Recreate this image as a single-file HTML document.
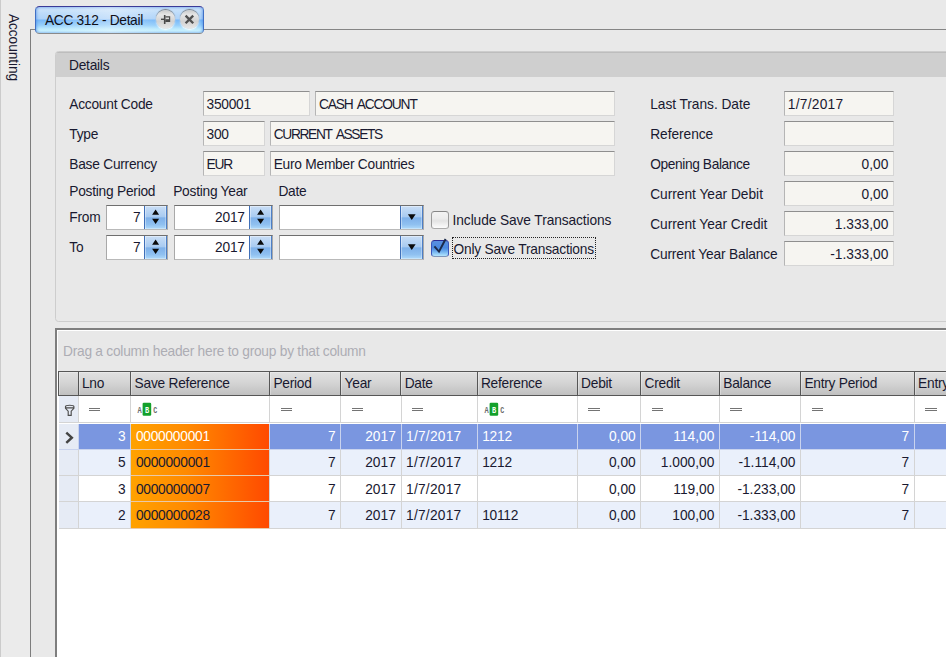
<!DOCTYPE html>
<html><head><meta charset="utf-8"><title>ACC 312 - Detail</title>
<style>
*{box-sizing:border-box;margin:0;padding:0}
html,body{width:946px;height:657px;overflow:hidden}
body{position:relative;background:#e9e9e9;font-family:"Liberation Sans",sans-serif;font-size:13.75px;letter-spacing:-0.25px;color:#191930;line-height:16px}
.a{position:absolute;white-space:nowrap}
#side{left:0;top:0;width:30px;height:657px;background:#ebebeb;border-left:1px solid #cbcbcb}
#sidetxt{left:19.8px;top:14.4px;transform-origin:0 0;transform:rotate(90deg);line-height:14px;letter-spacing:-0.1px}
#main{left:30px;top:29px;width:930px;height:640px;background:#e9e9e9;border-left:1.3px solid #7d7d7d;border-top:1.3px solid #858585}
#tab{left:35px;top:6px;width:169px;height:27.5px;border-radius:4.5px;border:1.7px solid #3f6fc4;border-top-color:#3b3b98;border-bottom-color:#8a8a8a;
 background:linear-gradient(to bottom,#d9ebfc 0%,#c0ddfa 20%,#aed3f9 46%,#78b8f8 50%,#96cffb 70%,#cdf5ff 90%,#dcfcff 100%);overflow:hidden;box-shadow:inset 0 0 3px 0.5px rgba(50,120,225,.65)}
#tab:before{content:"";position:absolute;left:20px;right:40px;top:0;bottom:0;background:linear-gradient(to right,rgba(255,255,255,0),rgba(255,255,255,.3) 50%,rgba(255,255,255,0))}
#tabtxt{left:45px;top:12.5px;color:#101018;letter-spacing:-0.33px}
.rb{width:19px;height:19px;border-radius:50%;background:linear-gradient(to bottom,#c9c9c9 0%,#e6e6e6 25%,#d2d2d2 60%,#e9e9e9 100%);box-shadow:0 -1px 1px rgba(90,90,90,.75),0 1px 1.5px rgba(255,255,255,.95)}
#details{left:55px;top:51px;width:910px;height:270.5px;background:#e8e8e8;border:1px solid #cdcdcd;border-radius:3.5px;overflow:hidden}
#dhead{left:0;top:0;width:100%;height:24.8px;background:#cfcfcf;border-top:1px solid #bdbdbd}
.f{height:24.5px;background:#f6f5f1;border:1.3px solid #d6d6d6;border-top-color:#8f8f8f;border-left-color:#b5b5b5;padding:4.5px 4.5px 0 3px}
.r{text-align:right;letter-spacing:0}
.sp{height:24.5px;background:#fff;border:1.3px solid #cfcfcf;border-top-color:#6f6f6f;border-left-color:#a9a9a9;border-right-color:#a9a9a9;border-bottom-color:#b9b9b9;padding:4.3px 0 0 0;text-align:right}
.btn{top:0;right:0;bottom:0;width:23px;border-left:1px solid #3f6fb8;border-right:1px solid #4d7fc6;
 background:linear-gradient(to bottom,#c9def6 0%,#a9cbf1 46%,#7fb1ea 52%,#8fc0f0 80%,#b0dafa 100%);box-shadow:inset 1px 1px 0 rgba(255,255,255,.4),inset -1px -1px 0 rgba(255,255,255,.3)}
.btn svg{position:absolute;left:0;top:0}
.cb{width:18px;height:17px;border-radius:3.5px}
#grid{left:55px;top:328px;width:910px;height:340px;background:#fff;border:2px solid #7e7e7e;border-right:0;border-bottom:0}
#gp{left:1px;top:1px;width:100%;height:41px;background:#e8e8e8}
.hc{top:370.5px;height:25.5px;border:1.2px solid #565656;border-left-width:0;background:linear-gradient(to bottom,#e0e0e0 0%,#d5d5d5 45%,#c0c0c0 100%);box-shadow:inset 1px 1px 0 rgba(255,255,255,.3);padding:4.8px 0 0 3.4px}
.row{left:58.8px;width:900px;height:26.4px}
.c{top:0;height:100%;border-right:1px solid #d4d4d4;border-bottom:1px solid #d4d4d4;padding:5.9px 4.8px 0 4.4px}
.ind{left:0;width:20px;background:#e6ebf5}
.sel .c{color:#fff;border-color:#c9d3ee;padding-top:5.9px}
.sr{background:linear-gradient(to right,#ffa200 0%,#ff8a00 40%,#ff4a00 100%);border-bottom-color:#e9c9a8 !important}
.eq{width:11.4px;height:3.5px;border-top:1.15px solid #747474;border-bottom:1.15px solid #747474;top:12px}
.abc text{font-family:"Liberation Mono",monospace;font-size:8.6px;font-weight:bold;letter-spacing:0;fill:#6c6c6c}
</style></head><body>
<div id="side" class="a"></div>
<div id="sidetxt" class="a">Accounting</div>
<div id="main" class="a"></div>
<div id="tab" class="a"></div>
<div id="tabtxt" class="a">ACC 312 - Detail</div>
<div class="a rb" style="left:156px;top:10px"></div>
<div class="a rb" style="left:180px;top:10px"></div>
<svg class="a" style="left:156px;top:10px" width="43" height="19" viewBox="0 0 43 19">
 <g fill="none" stroke="#4a4a4a" stroke-linecap="butt">
  <path d="M5 9.3H9" stroke-width="1.4"/><path d="M8.7 5V14" stroke-width="1.6"/><path d="M9.4 6.8H13.6V11.3H9.4" stroke-width="1.2"/><path d="M9.4 10.3H14" stroke-width="2.2"/>
  <path d="M29.6 5.6L37.2 13.2M37.2 5.6L29.6 13.2" stroke-width="2.3" stroke="#505050"/>
 </g></svg>

<div id="details" class="a"><div id="dhead" class="a"></div></div>
<div class="a" style="left:69px;top:57.5px">Details</div>

<div class="a" style="left:69.3px;top:96.5px">Account Code</div>
<div class="a" style="left:69.3px;top:126.5px">Type</div>
<div class="a" style="left:69.3px;top:156.5px">Base Currency</div>
<div class="a" style="left:69.3px;top:183.5px">Posting Period</div>
<div class="a" style="left:173.2px;top:183.5px">Posting Year</div>
<div class="a" style="left:278.4px;top:183.5px">Date</div>
<div class="a" style="left:69.3px;top:209.5px">From</div>
<div class="a" style="left:69.3px;top:239.5px">To</div>

<div class="a f" style="left:202.5px;top:91px;width:107.5px">350001</div>
<div class="a f" style="left:315px;top:91px;width:299.5px;letter-spacing:-1.15px;word-spacing:2.2px">CASH ACCOUNT</div>
<div class="a f" style="left:202.5px;top:121px;width:62.5px">300</div>
<div class="a f" style="left:269.7px;top:121px;width:345px;letter-spacing:-1.33px;word-spacing:2.6px">CURRENT ASSETS</div>
<div class="a f" style="left:202.5px;top:151px;width:62.5px;letter-spacing:-1.2px">EUR</div>
<div class="a f" style="left:269.7px;top:151px;width:345px">Euro Member Countries</div>

<div class="a sp" style="left:106px;top:205px;width:62px;padding-right:26.6px">7<div class="a btn"><svg width="23" height="22" viewBox="0 0 23 22"><path d="M10.6 3.4L14.1 8.8H7.1zM7.1 12.8H14.1L10.6 18.1z" fill="#0a0a0a"/></svg></div></div>
<div class="a sp" style="left:174px;top:205px;width:99px;padding-right:27.3px">2017<div class="a btn"><svg width="23" height="22" viewBox="0 0 23 22"><path d="M10.6 3.4L14.1 8.8H7.1zM7.1 12.8H14.1L10.6 18.1z" fill="#0a0a0a"/></svg></div></div>
<div class="a sp" style="left:278.6px;top:205px;width:145.6px"><div class="a btn"><svg width="23" height="22" viewBox="0 0 23 22"><path d="M6.9 8.3H14.6L10.75 14z" fill="#0a0a0a"/></svg></div></div>
<div class="a sp" style="left:106px;top:235px;width:62px;padding-right:26.6px">7<div class="a btn"><svg width="23" height="22" viewBox="0 0 23 22"><path d="M10.6 3.4L14.1 8.8H7.1zM7.1 12.8H14.1L10.6 18.1z" fill="#0a0a0a"/></svg></div></div>
<div class="a sp" style="left:174px;top:235px;width:99px;padding-right:27.3px">2017<div class="a btn"><svg width="23" height="22" viewBox="0 0 23 22"><path d="M10.6 3.4L14.1 8.8H7.1zM7.1 12.8H14.1L10.6 18.1z" fill="#0a0a0a"/></svg></div></div>
<div class="a sp" style="left:278.6px;top:235px;width:145.6px"><div class="a btn"><svg width="23" height="22" viewBox="0 0 23 22"><path d="M6.9 8.3H14.6L10.75 14z" fill="#0a0a0a"/></svg></div></div>

<div class="a cb" style="left:431px;top:211.3px;height:17.5px;border:1.7px solid #9a9a9a;border-top-color:#868686;border-bottom-color:#ababab;background:linear-gradient(to bottom,#f3f3f3 0%,#ececec 40%,#e3e3e3 55%,#f4f4f4 85%,#fcfcfc 100%)"></div>
<div class="a" style="left:452.6px;top:212.6px;letter-spacing:-0.1px">Include Save Transactions</div>
<div class="a cb" style="left:431px;top:239.6px;height:17.4px;border:1.8px solid #3a55bb;border-top-color:#2b2b92;border-bottom-color:#7f95b8;background:linear-gradient(to bottom,#5a90e0 0%,#4a88e0 45%,#5e9ee8 60%,#86c2f4 80%,#b4e6fd 100%)"></div>
<svg class="a" style="left:431px;top:234px" width="22" height="24" viewBox="0 0 22 24"><path d="M3.4 12.4L8 17.6L14.6 5" fill="none" stroke="#1c2a4a" stroke-width="2"/></svg>
<div class="a" style="left:452.3px;top:237.3px;width:143.6px;height:22.2px;border:1px dotted #222"></div>
<div class="a" style="left:453.5px;top:241.6px;letter-spacing:-0.22px">Only Save Transactions</div>

<div class="a" style="left:650.2px;top:96.5px;letter-spacing:-0.05px">Last Trans. Date</div>
<div class="a" style="left:650.2px;top:126.5px;letter-spacing:-0.05px">Reference</div>
<div class="a" style="left:650.2px;top:156.5px;letter-spacing:-0.39px">Opening Balance</div>
<div class="a" style="left:650.2px;top:186.5px;letter-spacing:-0.02px">Current Year Debit</div>
<div class="a" style="left:650.2px;top:216.5px;letter-spacing:-0.03px">Current Year Credit</div>
<div class="a" style="left:650.2px;top:246.5px;letter-spacing:-0.17px">Current Year Balance</div>
<div class="a f" style="left:783.8px;top:91px;width:110px;letter-spacing:0.25px">1/7/2017</div>
<div class="a f" style="left:783.8px;top:121px;width:110px"></div>
<div class="a f r" style="left:783.8px;top:151px;width:110px">0,00</div>
<div class="a f r" style="left:783.8px;top:181px;width:110px">0,00</div>
<div class="a f r" style="left:783.8px;top:211px;width:110px">1.333,00</div>
<div class="a f r" style="left:783.8px;top:241px;width:110px">-1.333,00</div>

<div id="grid" class="a"><div id="gp" class="a"></div></div>
<div class="a" style="left:63px;top:344.3px;color:#adadb4">Drag a column header here to group by that column</div>

<div class="a hc" style="left:58px;width:20.6px;border-left-width:1.2px"></div>
<div class="a hc" style="left:78.5px;width:52.8px">Lno</div>
<div class="a hc" style="left:131.2px;width:138.9px">Save Reference</div>
<div class="a hc" style="left:270px;width:71.3px">Period</div>
<div class="a hc" style="left:341.2px;width:60.2px">Year</div>
<div class="a hc" style="left:401.3px;width:76.3px">Date</div>
<div class="a hc" style="left:477.5px;width:100.3px">Reference</div>
<div class="a hc" style="left:577.7px;width:63.6px">Debit</div>
<div class="a hc" style="left:641.2px;width:78.8px">Credit</div>
<div class="a hc" style="left:719.9px;width:81.2px">Balance</div>
<div class="a hc" style="left:801px;width:113.8px">Entry Period</div>
<div class="a hc" style="left:914.7px;width:60px">Entry Year</div>

<div class="a row" style="top:395.5px;height:27.1px">
 <div class="a c ind"><svg class="a" style="left:5px;top:8px" width="12" height="13" viewBox="0 0 12 13"><path d="M1.5 2.4C1.5 0.9 9.9 0.9 9.9 2.4V4.3L7.2 7.2V11.4H4.2V7.2L1.5 4.3zM1.6 3.9H9.8" fill="none" stroke="#4e4e4e" stroke-width="1.15"/></svg></div>
 <div class="a c" style="left:20px;width:52.7px"><div class="a eq" style="left:10.3px"></div></div>
 <div class="a c" style="left:72.7px;width:138.8px"><svg class="a abc" style="left:6px;top:6.5px" width="22" height="15" viewBox="0 0 22 15"><text x="0.4" y="10.5" textLength="4.2" lengthAdjust="spacingAndGlyphs">A</text><rect x="5.6" y="0.7" width="8.6" height="13.1" rx="1.2" fill="#13a02b"/><text x="7.9" y="10.5" textLength="4.2" lengthAdjust="spacingAndGlyphs" style="fill:#f2fff2">B</text><text x="16.2" y="10.5" textLength="4" lengthAdjust="spacingAndGlyphs">C</text></svg></div>
 <div class="a c" style="left:211.5px;width:71.2px"><div class="a eq" style="left:10.3px"></div></div>
 <div class="a c" style="left:282.7px;width:60.1px"><div class="a eq" style="left:10.3px"></div></div>
 <div class="a c" style="left:342.8px;width:76.2px"><div class="a eq" style="left:10.3px"></div></div>
 <div class="a c" style="left:419px;width:100.2px"><svg class="a abc" style="left:6px;top:6.5px" width="22" height="15" viewBox="0 0 22 15"><text x="0.4" y="10.5" textLength="4.2" lengthAdjust="spacingAndGlyphs">A</text><rect x="5.6" y="0.7" width="8.6" height="13.1" rx="1.2" fill="#13a02b"/><text x="7.9" y="10.5" textLength="4.2" lengthAdjust="spacingAndGlyphs" style="fill:#f2fff2">B</text><text x="16.2" y="10.5" textLength="4" lengthAdjust="spacingAndGlyphs">C</text></svg></div>
 <div class="a c" style="left:519.2px;width:63.5px"><div class="a eq" style="left:10.3px"></div></div>
 <div class="a c" style="left:582.7px;width:78.7px"><div class="a eq" style="left:10.3px"></div></div>
 <div class="a c" style="left:661.4px;width:81.1px"><div class="a eq" style="left:10.3px"></div></div>
 <div class="a c" style="left:742.5px;width:113.7px"><div class="a eq" style="left:10.3px"></div></div>
 <div class="a c" style="left:856.2px;width:60px"><div class="a eq" style="left:10.3px"></div></div>
</div>

<div class="a row sel" style="top:423.6px;height:26px;background:#7a96e0">
 <div class="a c ind"><svg class="a" style="left:3px;top:5px" width="14" height="16" viewBox="0 0 14 16"><path d="M4.3 3.6L9.8 8.7L4.3 13.8" fill="none" stroke="#444" stroke-width="2.5"/></svg></div>
 <div class="a c r" style="left:20px;width:52.7px">3</div>
 <div class="a c sr" style="left:72.7px;width:138.8px">0000000001</div>
 <div class="a c r" style="left:211.5px;width:71.2px">7</div>
 <div class="a c r" style="left:282.7px;width:60.1px">2017</div>
 <div class="a c" style="left:342.8px;width:76.2px;letter-spacing:0.25px">1/7/2017</div>
 <div class="a c" style="left:419px;width:100.2px">1212</div>
 <div class="a c r" style="left:519.2px;width:63.5px">0,00</div>
 <div class="a c r" style="left:582.7px;width:78.7px">114,00</div>
 <div class="a c r" style="left:661.4px;width:81.1px">-114,00</div>
 <div class="a c r" style="left:742.5px;width:113.7px">7</div>
 <div class="a c r" style="left:856.2px;width:60px"></div>
</div>
<div class="a row" style="top:449.6px;background:#eaf0fb">
 <div class="a c ind"></div>
 <div class="a c r" style="left:20px;width:52.7px">5</div>
 <div class="a c sr" style="left:72.7px;width:138.8px">0000000001</div>
 <div class="a c r" style="left:211.5px;width:71.2px">7</div>
 <div class="a c r" style="left:282.7px;width:60.1px">2017</div>
 <div class="a c" style="left:342.8px;width:76.2px;letter-spacing:0.25px">1/7/2017</div>
 <div class="a c" style="left:419px;width:100.2px">1212</div>
 <div class="a c r" style="left:519.2px;width:63.5px">0,00</div>
 <div class="a c r" style="left:582.7px;width:78.7px">1.000,00</div>
 <div class="a c r" style="left:661.4px;width:81.1px">-1.114,00</div>
 <div class="a c r" style="left:742.5px;width:113.7px">7</div>
 <div class="a c r" style="left:856.2px;width:60px"></div>
</div>
<div class="a row" style="top:475.9px;background:#fff">
 <div class="a c ind"></div>
 <div class="a c r" style="left:20px;width:52.7px">3</div>
 <div class="a c sr" style="left:72.7px;width:138.8px">0000000007</div>
 <div class="a c r" style="left:211.5px;width:71.2px">7</div>
 <div class="a c r" style="left:282.7px;width:60.1px">2017</div>
 <div class="a c" style="left:342.8px;width:76.2px;letter-spacing:0.25px">1/7/2017</div>
 <div class="a c" style="left:419px;width:100.2px"></div>
 <div class="a c r" style="left:519.2px;width:63.5px">0,00</div>
 <div class="a c r" style="left:582.7px;width:78.7px">119,00</div>
 <div class="a c r" style="left:661.4px;width:81.1px">-1.233,00</div>
 <div class="a c r" style="left:742.5px;width:113.7px">7</div>
 <div class="a c r" style="left:856.2px;width:60px"></div>
</div>
<div class="a row" style="top:502.2px;background:#eaf0fb">
 <div class="a c ind"></div>
 <div class="a c r" style="left:20px;width:52.7px">2</div>
 <div class="a c sr" style="left:72.7px;width:138.8px">0000000028</div>
 <div class="a c r" style="left:211.5px;width:71.2px">7</div>
 <div class="a c r" style="left:282.7px;width:60.1px">2017</div>
 <div class="a c" style="left:342.8px;width:76.2px;letter-spacing:0.25px">1/7/2017</div>
 <div class="a c" style="left:419px;width:100.2px">10112</div>
 <div class="a c r" style="left:519.2px;width:63.5px">0,00</div>
 <div class="a c r" style="left:582.7px;width:78.7px">100,00</div>
 <div class="a c r" style="left:661.4px;width:81.1px">-1.333,00</div>
 <div class="a c r" style="left:742.5px;width:113.7px">7</div>
 <div class="a c r" style="left:856.2px;width:60px"></div>
</div>
</body></html>
